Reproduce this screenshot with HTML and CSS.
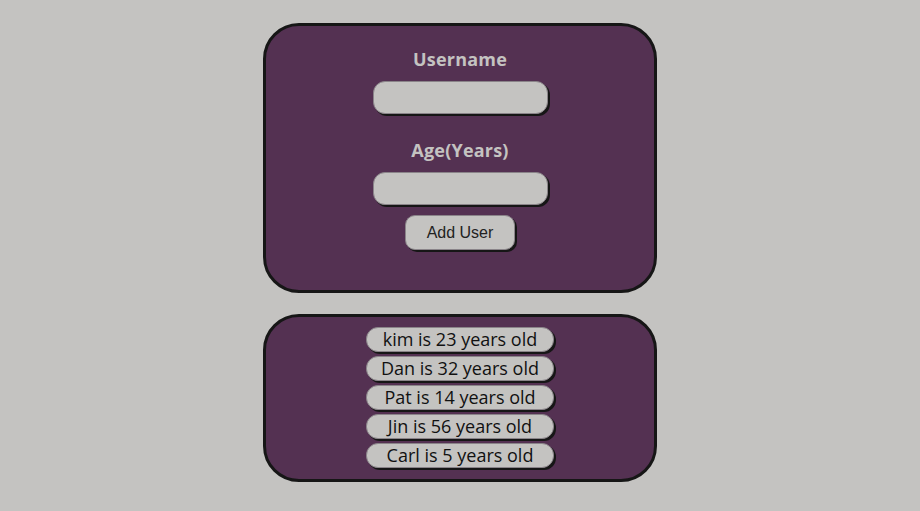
FILE: index.html
```html
<!DOCTYPE html>
<html lang="en">
<head>
  <meta charset="UTF-8" />
  <meta name="viewport" content="width=device-width, initial-scale=1.0" />
  <title>Add User</title>
  <link rel="stylesheet" href="styles.css">
</head>
<body>
  <form class="card user-form">
    <label for="username">Username</label>
    <input id="username" type="text">
    <label for="age">Age(Years)</label>
    <input id="age" type="number">
    <button type="button" class="add-btn">Add User</button>
  </form>
  <ul class="card users">
    <li>kim is 23 years old</li>
    <li>Dan is 32 years old</li>
    <li>Pat is 14 years old</li>
    <li>Jin is 56 years old</li>
    <li>Carl is 5 years old</li>
  </ul>
</body>
</html>
```

FILE: styles.css
```css
* { box-sizing: border-box; margin: 0; padding: 0; }
body {
  background: #c4c3c1;
  display: flex;
  flex-direction: column;
  align-items: center;
  padding-top: 23px;
  gap: 21px;
  font-family: 'Open Sans', sans-serif;
}
.card {
  width: 394px;
  background: #543152;
  border: 3px solid #161616;
  border-radius: 36px;
}
.user-form {
  height: 270px;
  display: flex;
  flex-direction: column;
  align-items: center;
  padding-top: 21px;
}
.user-form label {
  font-weight: 700;
  font-size: 18px;
  letter-spacing: 0.2px;
  line-height: 24px;
  color: #c4c3c1;
}
.user-form input {
  width: 175px;
  height: 33px;
  margin-top: 10px;
  margin-bottom: 24px;
  background: #c4c3c1;
  border: 1px solid #8a8489;
  border-radius: 12px;
  box-shadow: 2px 2px 0 #161616;
  outline: none;
}
.user-form input#age { margin-bottom: 10px; }
.add-btn {
  width: 110px;
  height: 35px;
  background: #c4c3c1;
  border: 1px solid #8a8489;
  border-radius: 10px;
  box-shadow: 2px 2px 0 #161616;
  font-family: 'Liberation Sans', Arial, sans-serif;
  font-size: 16px;
  color: #222;
}
.users {
  list-style: none;
  height: 168px;
  display: flex;
  flex-direction: column;
  align-items: center;
  gap: 4px;
  padding-top: 10px;
}
.users li {
  width: 188px;
  height: 25px;
  background: #c4c3c1;
  border: 1px solid #8a8489;
  border-radius: 12px;
  box-shadow: 2px 2px 0 #161616;
  text-align: center;
  font-size: 18px;
  line-height: 23px;
  color: #111;
}
```
